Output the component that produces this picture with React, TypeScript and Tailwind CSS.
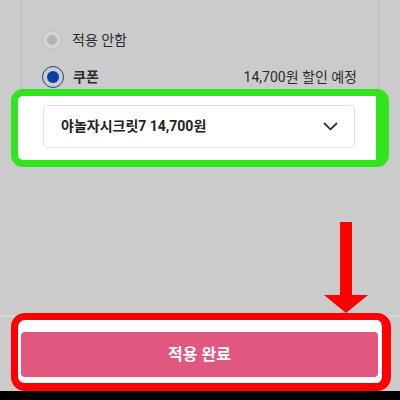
import React from 'react';

const font = { fontFamily: 'Roboto, "Noto Sans CJK KR", sans-serif' };

function Radio({ checked, disabled }: { checked?: boolean; disabled?: boolean }) {
  if (disabled) {
    return (
      <span className="flex h-[20px] w-[20px] items-center justify-center rounded-full border border-[#bababa] bg-[#d4d4d4]">
        <span className="h-[10px] w-[10px] rounded-full bg-[#b3b3b3]" />
      </span>
    );
  }
  return (
    <span className="flex h-[22px] w-[22px] items-center justify-center rounded-full border-[1.5px] border-[#23418a]">
      {checked && <span className="h-[12px] w-[12px] rounded-full bg-[#0b3fa6]" />}
    </span>
  );
}

export default function App() {
  return (
    <div className="relative flex h-[400px] w-[400px] flex-col overflow-hidden bg-[#cbcbcb]" style={font}>
      {/* dimmed coupon panel */}
      <div className="mx-[21px] flex h-[89px] flex-col border-x border-[#bdbdbd] pl-[20px] pr-[21px] pt-[29px] text-[#2b2b2b]">
        <div className="flex h-[22px] items-center gap-[10px]">
          <Radio disabled />
          <span className="text-[14px]">적용 안함</span>
        </div>
        <div className="mt-[15px] flex h-[22px] items-center gap-[9px]">
          <Radio checked />
          <span className="text-[14px] font-bold">쿠폰</span>
          <span className="ml-auto text-[14px]">14,700원 할인 예정</span>
        </div>
      </div>

      {/* highlighted select */}
      <div className="mx-[11px] h-[78px] rounded-[12px] border-[7px] border-r-[13px] border-[#2fe61c] bg-white pl-[25px] pr-[21px] pt-[9px]">
        <div className="flex h-[43px] items-center justify-between rounded-[4px] border border-[#e2e2e2] pl-[17px] pr-[16px]">
          <span className="text-[14px] font-bold text-[#222]">야놀자시크릿7 14,700원</span>
          <svg width="15" height="9" viewBox="0 0 15 9" fill="none">
            <path d="M1.5 1.5L7.5 7.3L13.5 1.5" stroke="#333" strokeWidth="1.8" strokeLinecap="round" strokeLinejoin="round" />
          </svg>
        </div>
      </div>

      <div className="h-[150px] border-b-2 border-[#d9d9d9]" />

      {/* highlighted confirm button */}
      <div className="relative z-10 -mt-[4px] ml-[11px] mr-[9px] h-[78px] rounded-[14px] border-[7px] border-b-[8px] border-r-[9px] border-[#ff0000] bg-white pb-[6px] pl-[3px] pr-[4px] pt-[12px]">
        <button className="flex h-[45px] w-full items-center justify-center rounded-[4px] bg-[#e25780] text-[16px] font-bold text-white">
          적용 완료
        </button>
      </div>

      <div className="mt-auto h-[9px] bg-black" />

      {/* arrow annotation */}
      <svg className="absolute left-[324px] top-[222px]" width="44" height="91" viewBox="0 0 44 91">
        <rect x="16" y="0" width="12" height="74" fill="#ff0000" />
        <polygon points="0,73 44,73 22,91" fill="#ff0000" />
      </svg>
    </div>
  );
}
